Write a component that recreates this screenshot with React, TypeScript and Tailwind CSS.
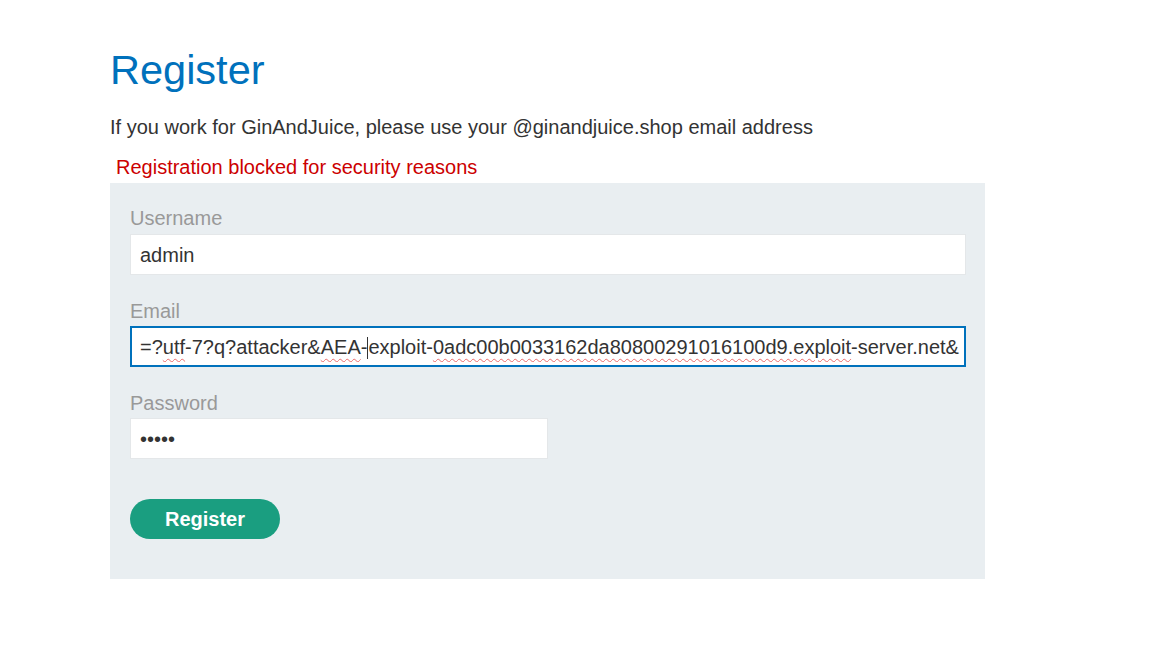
import React from 'react';

const font = { fontFamily: '"Liberation Sans", Arial, sans-serif' };

const Squiggle = ({ children }: { children: React.ReactNode }) => (
  <span className="underline decoration-wavy decoration-[#ec6a6a] decoration-1 underline-offset-[4px]">
    {children}
  </span>
);

const App = () => {
  return (
    <div className="min-h-screen bg-white text-[#333333]" style={font}>
      <div className="pl-[110px] pt-[46px]">
        {/* Заголовок */}
        <h1 className="text-[41.5px] leading-[48px] text-[#0071bc]">Register</h1>
        <p className="mt-[21px] text-[20px] leading-[24px]">
          If you work for GinAndJuice, please use your @ginandjuice.shop email address
        </p>
        <p className="mt-[16px] ml-[6px] text-[20px] leading-[24px] text-[#cc0000]">
          Registration blocked for security reasons
        </p>

        {/* Форма */}
        <form className="mt-[4px] w-[875px] bg-[#e9eef1] pl-[20px] pr-[19px] pt-[23px] pb-[40px]">
          <label className="block text-[20px] leading-[24px] text-[#999999] mb-[4px]">Username</label>
          <div className="h-[41px] w-full bg-white border border-[#e4e7e9] px-[9px] flex items-center text-[20px] mb-[24px]">
            admin
          </div>

          <label className="block text-[20px] leading-[24px] text-[#999999] mb-[3px]">Email</label>
          <div className="h-[41px] w-full bg-white border-2 border-[#0071bc] pl-[8px] pr-[4px] flex items-center text-[20px] mb-[24px]">
            <div className="flex-1 overflow-hidden whitespace-nowrap">
              =?<Squiggle>utf</Squiggle>-7?q?attacker&amp;<Squiggle>AEA</Squiggle>-
              <span className="inline-block w-px h-[22px] bg-[#333] align-[-5px]" />
              exploit-<Squiggle>0adc00b0033162da80800291016100d9.exploit</Squiggle>-server.net&amp;
            </div>
          </div>

          <label className="block text-[20px] leading-[24px] text-[#999999] mb-[3px]">Password</label>
          <div className="h-[41px] w-[418px] bg-white border border-[#e4e7e9] px-[9px] flex items-center text-[20px]">
            •••••
          </div>

          <button
            type="button"
            className="mt-[40px] h-[40px] w-[150px] rounded-full bg-[#1a9e80] text-white font-bold text-[20px]"
          >
            Register
          </button>
        </form>
      </div>
    </div>
  );
};

export default App;
